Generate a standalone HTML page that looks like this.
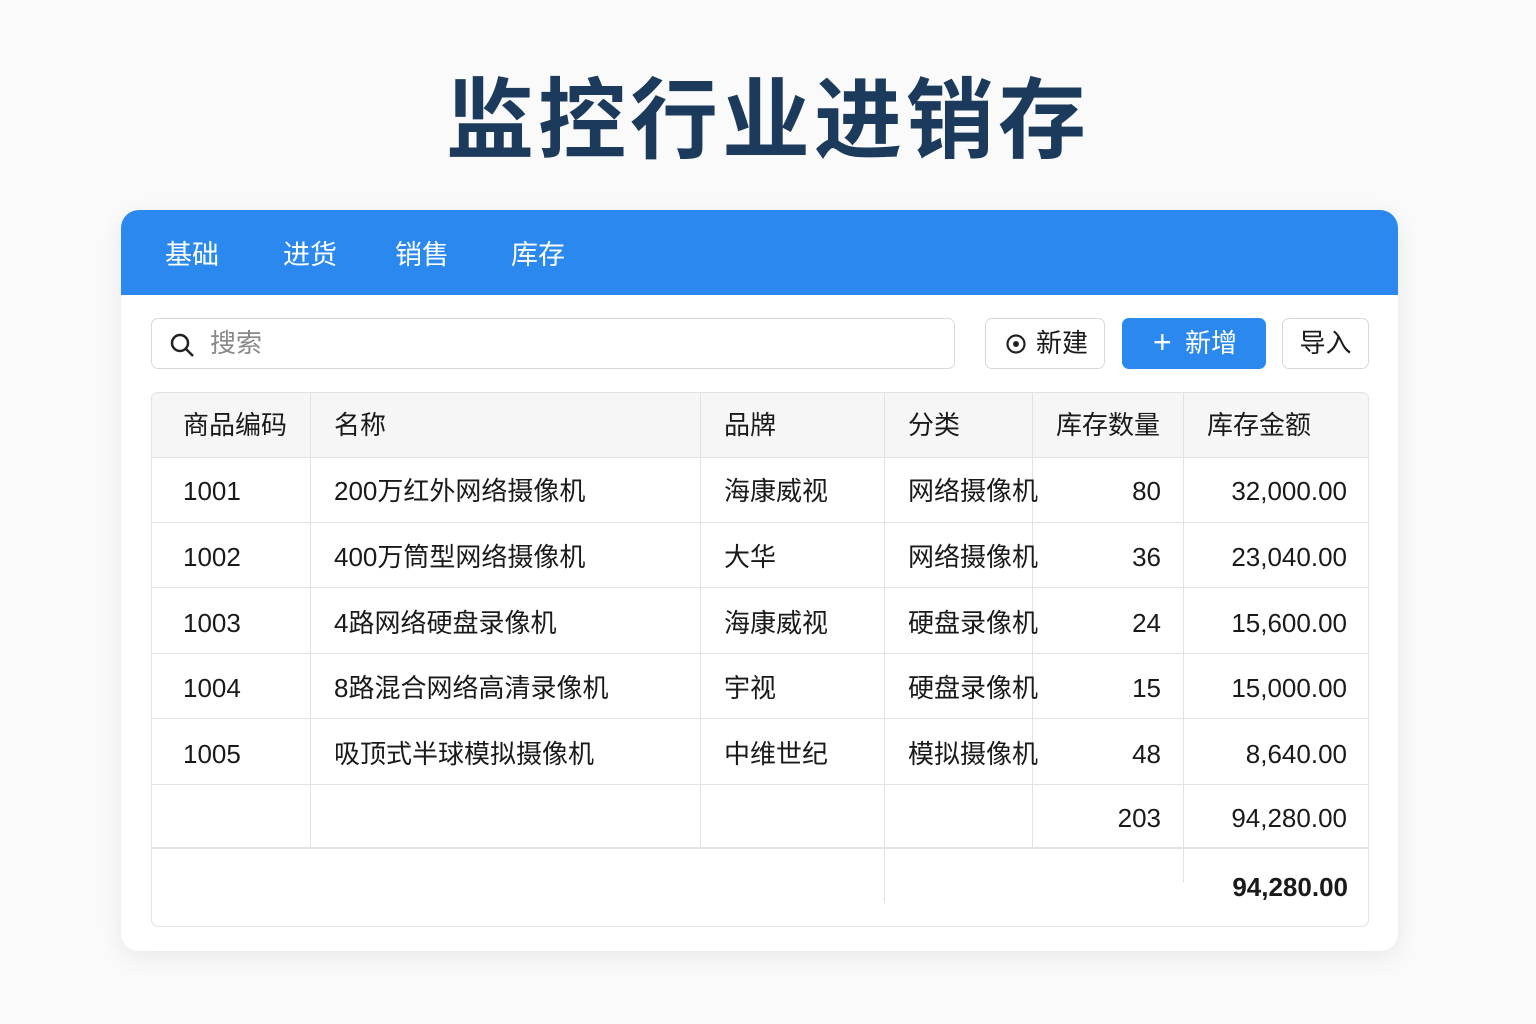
<!DOCTYPE html>
<html><head><meta charset="utf-8"><style>
*{margin:0;padding:0;box-sizing:border-box}
body{width:1536px;height:1024px;background:#fafafa;font-family:"Liberation Sans","Noto Sans CJK SC",sans-serif;position:relative;overflow:hidden;color:#1a1a1a}
.title{position:absolute;top:50px;left:0;width:1536px;text-align:center;font-size:88px;font-weight:700;color:#1b3a5c;letter-spacing:4px;font-family:"Noto Sans CJK SC",sans-serif}
.card{position:absolute;left:121px;top:210px;width:1277px;height:741px;background:#fff;border-radius:18px;box-shadow:0 6px 24px rgba(0,0,0,.08);overflow:hidden}
.hd{position:absolute;left:0;top:0;width:100%;height:85px;background:#2a88ee}
.tab{position:absolute;top:28px;color:#fff;font-size:27px;line-height:34px}
.box{position:absolute;top:108px;height:51px;border:1px solid #d9d9d9;border-radius:7px;background:#fff;font-size:26px;line-height:49px}
.t{position:absolute;font-size:26px;line-height:30px}
.r{text-align:right}
.h{position:absolute;left:30px;height:1px;background:#e2e2e2;width:1217px}
.v{position:absolute;width:1px;background:#e2e2e2}
</style></head><body>
<div class="title">监控行业进销存</div>
<div class="card">
 <div class="hd">
  <div class="tab" style="left:44px">基础</div>
  <div class="tab" style="left:162px">进货</div>
  <div class="tab" style="left:274px">销售</div>
  <div class="tab" style="left:390px">库存</div>
 </div>
 <div class="box" style="left:30px;width:804px;color:#888;padding-left:58px">搜索
  <svg style="position:absolute;left:17px;top:13px" width="28" height="28" viewBox="0 0 28 28"><circle cx="11" cy="11" r="8" fill="none" stroke="#222" stroke-width="2.5"/><path d="M17 17l7 7" stroke="#222" stroke-width="2.5"/></svg></div>
 <div class="box" style="left:864px;width:120px;padding-left:50px">新建
  <svg style="position:absolute;left:19px;top:14px" width="22" height="22" viewBox="0 0 22 22"><circle cx="11" cy="11" r="8.5" fill="none" stroke="#222" stroke-width="2.2"/><circle cx="11" cy="11" r="3" fill="#222"/></svg></div>
 <div class="box" style="left:1001px;width:144px;background:#2a88ee;border-color:#2a88ee;color:#fff;padding-left:62px"><span style="position:absolute;left:30px;top:-1px;font-size:32px">+</span>新增</div>
 <div class="box" style="left:1161px;width:87px;text-align:center">导入</div>
 <div style="position:absolute;left:30px;top:182px;width:1218px;height:535px;border:1px solid #e2e2e2;border-radius:7px"></div>
 <div style="position:absolute;left:31px;top:183px;width:1216px;height:64px;background:#f6f6f6;border-radius:7px 7px 0 0"></div>
 <div class="h" style="top:247px"></div><div class="h" style="top:312px"></div><div class="h" style="top:377px"></div><div class="h" style="top:443px"></div><div class="h" style="top:508px"></div><div class="h" style="top:574px"></div><div class="h" style="top:637px;height:2px"></div>
 <div class="v" style="left:189px;top:183px;height:454px"></div>
 <div class="v" style="left:579px;top:183px;height:454px"></div>
 <div class="v" style="left:763px;top:183px;height:510px"></div>
 <div class="v" style="left:911px;top:183px;height:454px"></div>
 <div class="v" style="left:1062px;top:183px;height:490px"></div>
 <div class="t" style="left:62px;top:200px">商品编码</div><div class="t" style="left:213px;top:200px">名称</div><div class="t" style="left:603px;top:200px">品牌</div><div class="t" style="left:787px;top:200px">分类</div><div class="t" style="left:935px;top:200px">库存数量</div><div class="t" style="left:1086px;top:200px">库存金额</div>
 <div class="t" style="left:62px;top:266px">1001</div><div class="t" style="left:213px;top:266px">200万红外网络摄像机</div><div class="t" style="left:603px;top:266px">海康威视</div><div class="t" style="left:787px;top:266px">网络摄像机</div><div class="t r" style="left:940px;width:100px;top:266px">80</div><div class="t r" style="left:1046px;width:180px;top:266px">32,000.00</div>
 <div class="t" style="left:62px;top:332px">1002</div><div class="t" style="left:213px;top:332px">400万筒型网络摄像机</div><div class="t" style="left:603px;top:332px">大华</div><div class="t" style="left:787px;top:332px">网络摄像机</div><div class="t r" style="left:940px;width:100px;top:332px">36</div><div class="t r" style="left:1046px;width:180px;top:332px">23,040.00</div>
 <div class="t" style="left:62px;top:398px">1003</div><div class="t" style="left:213px;top:398px">4路网络硬盘录像机</div><div class="t" style="left:603px;top:398px">海康威视</div><div class="t" style="left:787px;top:398px">硬盘录像机</div><div class="t r" style="left:940px;width:100px;top:398px">24</div><div class="t r" style="left:1046px;width:180px;top:398px">15,600.00</div>
 <div class="t" style="left:62px;top:463px">1004</div><div class="t" style="left:213px;top:463px">8路混合网络高清录像机</div><div class="t" style="left:603px;top:463px">宇视</div><div class="t" style="left:787px;top:463px">硬盘录像机</div><div class="t r" style="left:940px;width:100px;top:463px">15</div><div class="t r" style="left:1046px;width:180px;top:463px">15,000.00</div>
 <div class="t" style="left:62px;top:529px">1005</div><div class="t" style="left:213px;top:529px">吸顶式半球模拟摄像机</div><div class="t" style="left:603px;top:529px">中维世纪</div><div class="t" style="left:787px;top:529px">模拟摄像机</div><div class="t r" style="left:940px;width:100px;top:529px">48</div><div class="t r" style="left:1046px;width:180px;top:529px">8,640.00</div>
 <div class="t r" style="left:940px;width:100px;top:593px">203</div><div class="t r" style="left:1046px;width:180px;top:593px">94,280.00</div>
 <div class="t r" style="left:1046px;width:181px;top:662px;font-weight:bold">94,280.00</div>
</div>
</body></html>
